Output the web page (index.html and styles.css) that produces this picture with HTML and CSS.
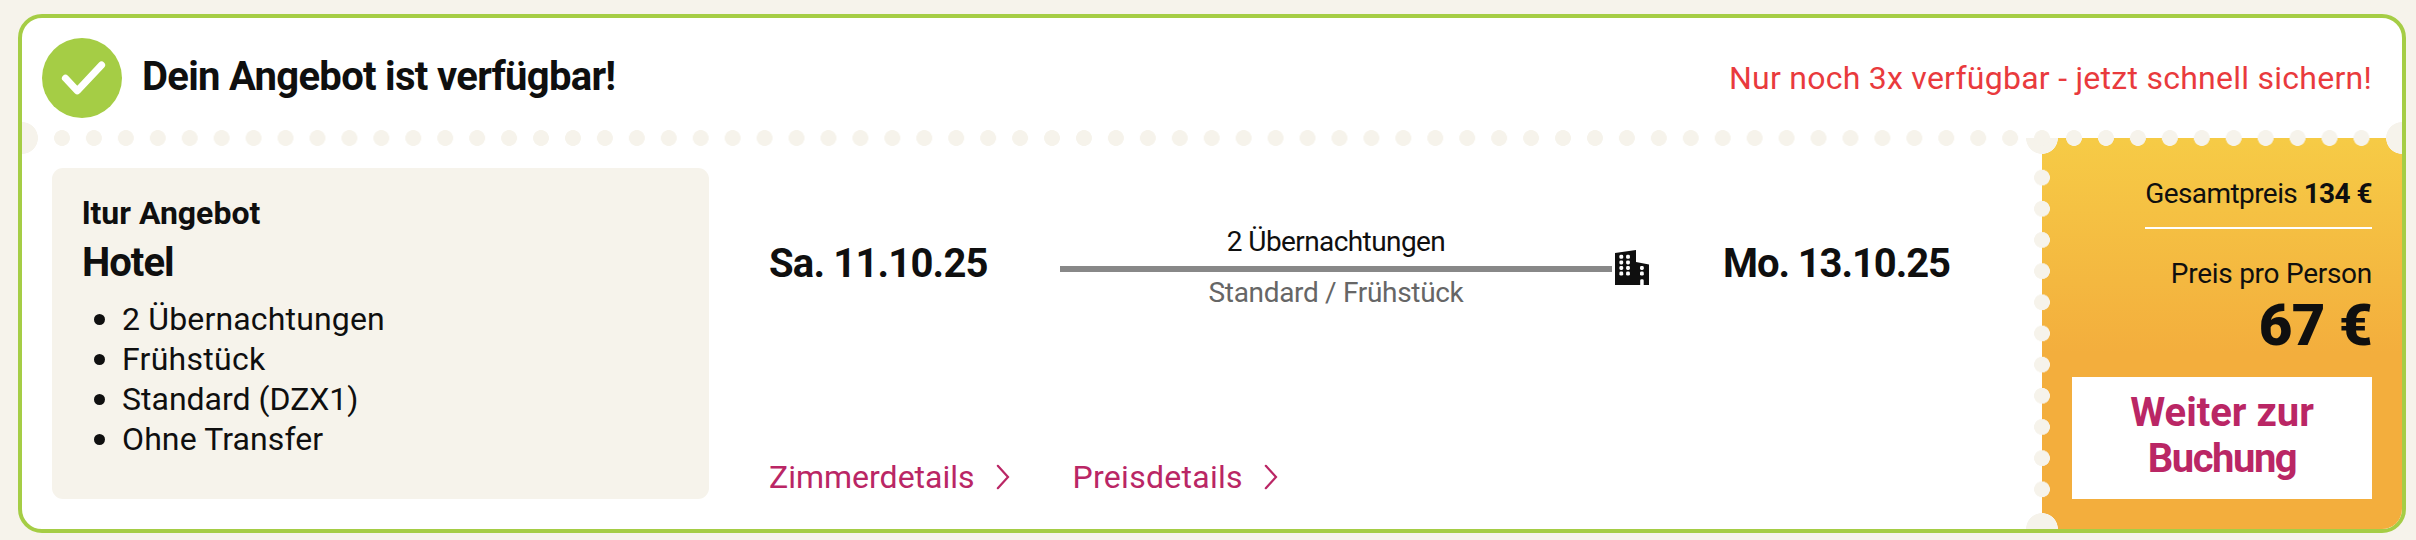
FILE: index.html
```html
<!DOCTYPE html>
<html lang="de">
  <head>
    <title>Dein Angebot ist verfügbar!</title>
    <meta charset="utf-8">
    <link rel="stylesheet" href="styles.css">
  </head>
  <body>

  <div class="offer">

    <div class="offer-header">
      <svg class="check" viewBox="0 0 80 80">
        <circle cx="40" cy="40" r="40"/>
        <path d="M23.4 40.2 L35.3 52.8 L59.6 27"/>
      </svg>
      <h2>Dein Angebot ist verfügbar!</h2>
      <span class="hint">Nur noch 3x verfügbar - jetzt schnell sichern!</span>
    </div>

    <div class="offer-body">

      <div class="info">
        <div class="info-label">ltur Angebot</div>
        <div class="info-title">Hotel</div>
        <ul>
          <li class="nights">2 Übernachtungen</li>
          <li class="board">Frühstück</li>
          <li>Standard (DZX1)</li>
          <li class="transfer">Ohne Transfer</li>
        </ul>
      </div>

      <div class="trip">
        <div class="trip-row">
          <div class="date from">Sa. 11.10.25</div>
          <div class="route">
            <div class="route-top">2 Übernachtungen</div>
            <div class="route-line"></div>
            <div class="route-bottom">Standard / Frühstück</div>
            <svg class="building" viewBox="0 0 34 35">
              <path d="M0 3 L21 0 V12 L34 14.6 V35 H28.7 V30.6 Q28.7 29.2 27.4 29.2 H26.6 Q25.2 29.2 25.2 30.6 V35 H0 Z"/>
              <g>
                <rect x="4.4" y="4.8" width="3.8" height="4" rx="1.4"/>
                <rect x="11.1" y="4.8" width="3.8" height="4" rx="1.4"/>
                <rect x="4.4" y="10.4" width="3.8" height="4" rx="1.4"/>
                <rect x="11.1" y="10.4" width="3.8" height="4" rx="1.4"/>
                <rect x="4.4" y="16" width="3.8" height="4" rx="1.4"/>
                <rect x="11.1" y="16" width="3.8" height="4" rx="1.4"/>
                <rect x="4.4" y="21.6" width="3.8" height="4" rx="1.4"/>
                <rect x="11.1" y="21.6" width="3.8" height="4" rx="1.4"/>
                <rect x="25" y="16" width="3.8" height="4" rx="1.4"/>
                <rect x="25" y="21.6" width="3.8" height="4" rx="1.4"/>
              </g>
            </svg>
          </div>
          <div class="date to">Mo. 13.10.25</div>
        </div>

        <div class="links">
          <a class="room-link" href="#">Zimmerdetails<svg viewBox="0 0 14 26"><path d="M1.8 1.8 L12 13 L1.8 24.2"/></svg></a>
          <a class="price-link" href="#">Preisdetails<svg viewBox="0 0 14 26"><path d="M1.8 1.8 L12 13 L1.8 24.2"/></svg></a>
        </div>
      </div>

      <div class="price">
        <div class="total">Gesamtpreis <b>134 €</b></div>
        <div class="per-person">Preis pro Person</div>
        <div class="amount">67 €</div>
        <a class="book" href="#">Weiter zur<br><span>Buchung</span></a>
      </div>

    </div>
  </div>

  </body>
</html>
```

FILE: styles.css
```css
body {
  margin: 0;
  padding: 14px 10px 7px 18px;
  background: #f6f3eb;
  color: #0f0f0f;
  font-family: Roboto, "Liberation Sans", sans-serif;
  font-size: 32px;
}

h2, ul {
  margin: 0;
  padding: 0;
}

a {
  color: #ba2665;
  text-decoration: none;
}

.offer {
  box-sizing: border-box;
  height: 519px;
  border: 4px solid #a5cd45;
  border-radius: 24px;
  background: #fff;
  display: flex;
  flex-direction: column;
  overflow: hidden;
}

/* header */

.offer-header {
  display: flex;
  align-items: center;
  height: 120px;
  padding: 0 30px 0 20px;
}

.check {
  width: 80px;
  height: 80px;
  margin-right: 20px;
}
.check circle {
  fill: #a5cd45;
}
.check path {
  fill: none;
  stroke: #fff;
  stroke-width: 7;
  stroke-linecap: round;
  stroke-linejoin: round;
}

.offer-header h2 {
  font-size: 40px;
  line-height: 48px;
  letter-spacing: -0.7px;
  padding-bottom: 3px;
}

.hint {
  margin-left: auto;
  padding-bottom: 1px;
  color: #e93a3d;
  letter-spacing: 0.26px;
}

/* body, with the perforation on its upper edge */

.offer-body {
  position: relative;
  flex: 1;
  display: flex;
}
.offer-body::before {
  content: "";
  position: absolute;
  z-index: 1;
  top: -8px;
  left: 24px;
  right: 24px;
  height: 16px;
  background: radial-gradient(circle, #f6f3eb 7.6px, transparent 8.2px) 0 0 / 32px 16px round;
}
.offer-body::after {
  content: "";
  position: absolute;
  z-index: 1;
  top: -16px;
  left: 0;
  right: 0;
  height: 32px;
  background:
    radial-gradient(circle at 0 50%, #f6f3eb 15.6px, transparent 16.2px) no-repeat,
    radial-gradient(circle at 100% 50%, #f6f3eb 15.6px, transparent 16.2px) no-repeat;
}

.info {
  box-sizing: border-box;
  width: 657px;
  margin: 30px 0 30px 30px;
  padding: 21px 30px;
  border-radius: 11px;
  background: #f6f3eb;
}
.info-label {
  font-weight: bold;
  line-height: 48px;
}
.info-title {
  font-size: 40px;
  font-weight: bold;
  line-height: 52px;
  letter-spacing: -0.99px;
}
.info ul {
  margin-top: 10px;
  list-style: none;
}
.info li {
  display: flex;
  align-items: center;
  line-height: 40px;
}
.info li::before {
  content: "";
  width: 11px;
  height: 11px;
  margin: 1px 17px 0 12px;
  border-radius: 50%;
  background: #0f0f0f;
}
.nights {
  letter-spacing: 0.16px;
}
.board {
  letter-spacing: 0.28px;
}
.transfer {
  letter-spacing: 0.11px;
}

/* dates and route */

.trip {
  flex: 1;
  display: flex;
  flex-direction: column;
  justify-content: space-between;
  padding: 87px 90px 32px 60px;
}
.trip-row {
  display: flex;
  gap: 72px;
}

.date {
  margin-top: 15px;
  font-size: 40px;
  font-weight: bold;
  line-height: 48px;
  white-space: nowrap;
}
.from {
  width: 219px;
  letter-spacing: -0.82px;
}
.to {
  width: 229px;
  letter-spacing: -1.1px;
}

.route {
  flex: 1;
  display: grid;
  grid-template-columns: 1fr 39px;
  font-size: 28px;
  line-height: 34px;
  text-align: center;
}
.route-top {
  letter-spacing: -0.59px;
}
.route-line {
  height: 6px;
  margin: 7px 0 4px;
  background: #888;
}
.route-bottom {
  color: #666;
  letter-spacing: -0.32px;
}
.building {
  grid-column: 2;
  grid-row: 1 / 4;
  align-self: center;
  justify-self: end;
  width: 34px;
  height: 35px;
  margin-right: 2px;
  fill: #0f0f0f;
}
.building g {
  fill: #fff;
}

.links {
  display: flex;
  gap: 63px;
  line-height: 40px;
}
.links a {
  display: flex;
  align-items: center;
}
.links svg {
  width: 14px;
  height: 26px;
  margin-left: 21px;
  fill: none;
  stroke: #ba2665;
  stroke-width: 2.2;
  stroke-linecap: round;
}
.price-link {
  letter-spacing: 0.28px;
}

/* price coupon */

.price {
  position: relative;
  box-sizing: border-box;
  width: 360px;
  padding: 36px 30px 30px;
  display: flex;
  flex-direction: column;
  align-items: flex-end;
  font-size: 28px;
  background: linear-gradient(#f6cb46, #f3ae3d 55%);
}
.price::before {
  content: "";
  position: absolute;
  top: 24px;
  bottom: 24px;
  left: -8px;
  width: 16px;
  background: radial-gradient(circle, #f6f3eb 7.6px, transparent 8.2px) 0 0 / 16px 32px round;
}
.price::after {
  content: "";
  position: absolute;
  top: 0;
  bottom: 0;
  left: -16px;
  width: 32px;
  background:
    radial-gradient(circle at 50% 0, #f6f3eb 15.6px, transparent 16.2px) no-repeat,
    radial-gradient(circle at 50% 100%, #f6f3eb 15.6px, transparent 16.2px) no-repeat;
}

.total {
  padding-bottom: 13px;
  border-bottom: 2px solid #fff;
  line-height: 40px;
  letter-spacing: -0.57px;
}
.per-person {
  margin-top: 28px;
  line-height: 34px;
  letter-spacing: -0.27px;
}
.amount {
  margin-top: 4px;
  font-size: 58px;
  font-weight: 900;
  line-height: 60px;
  letter-spacing: -0.5px;
}
.book {
  box-sizing: border-box;
  width: 300px;
  margin-top: auto;
  padding: 13px 0 17px;
  background: #fff;
  font-size: 40px;
  font-weight: bold;
  line-height: 46px;
  text-align: center;
}
.book span {
  letter-spacing: -1.5px;
}
```
